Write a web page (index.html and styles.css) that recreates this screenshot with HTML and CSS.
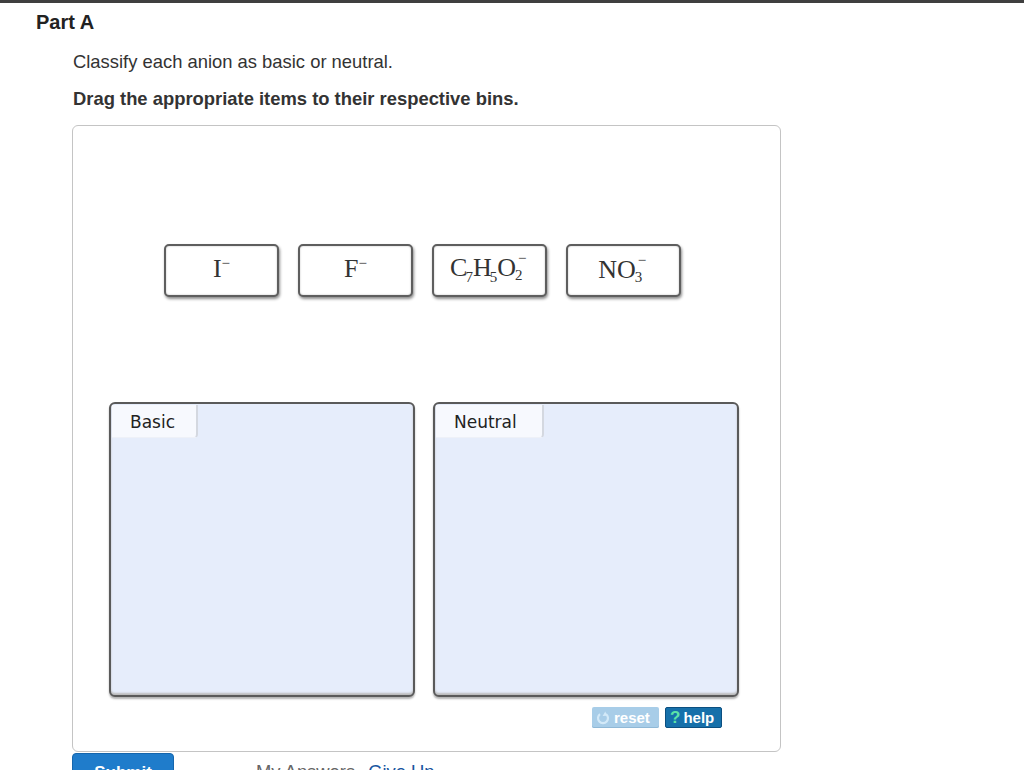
FILE: index.html
```html
<!DOCTYPE html>
<html>
<head>
<meta charset="utf-8">
<link rel="stylesheet" href="styles.css">
</head>
<body>
<div class="topbar"></div>
<h2 class="part">Part A</h2>
<div class="content">
  <p class="prompt">Classify each anion as basic or neutral.</p>
  <p class="instr">Drag the appropriate items to their respective bins.</p>
  <div class="workspace">
    <div class="tiles">
      <div class="tile"><span class="f">I<span class="minus">&minus;</span></span></div>
      <div class="tile"><span class="f">F<span class="minus">&minus;</span></span></div>
      <div class="tile"><span class="f">C<sub>7</sub>H<sub>5</sub>O<span class="stack"><span class="up">&minus;</span><span class="dn">2</span></span></span></div>
      <div class="tile"><span class="f">NO<span class="stack"><span class="up">&minus;</span><span class="dn">3</span></span></span></div>
    </div>
    <div class="bins">
      <div class="bin"><div class="label">Basic</div></div>
      <div class="bin"><div class="label">Neutral</div></div>
    </div>
    <div class="tools">
      <span class="btn reset"><svg class="ico" viewBox="0 0 14 14" width="14" height="14"><path d="M4 3.2 A5 5 0 1 0 10 3.2" fill="none" stroke="#d3e9f8" stroke-width="2.2"/><path d="M9.3 0.4 L11 4.8 L6.6 4.9 Z" fill="#d3e9f8"/></svg>reset</span>
      <span class="btn help"><span class="q">?</span>help</span>
    </div>
  </div>
  <div class="footer">
    <span class="submit">Submit</span>
    <span class="links"><span class="mine">My Answers</span><span class="giveup">Give Up</span></span>
  </div>
</div>
</body>
</html>
```

FILE: styles.css
```css
html, body {
  margin: 0;
  padding: 0;
  background: #fff;
  font-family: "Liberation Sans", Arial, sans-serif;
  color: #333;
  overflow: hidden;
  height: 770px;
}
.topbar {
  height: 3px;
  background: #3f3f3f;
}
.part {
  margin: 7px 0 0 36px;
  font-size: 20px;
  font-weight: bold;
  color: #222;
  line-height: 24px;
}
.content {
  margin-left: 72px;
  width: 709px;
}
.prompt {
  margin: 17px 0 0 1px;
  font-size: 18.4px;
  line-height: 22px;
}
.instr {
  margin: 15px 0 0 1px;
  font-size: 18.4px;
  font-weight: bold;
  line-height: 22px;
}
.workspace {
  margin-top: 15px;
  height: 625px;
  border: 1px solid #c4c4c4;
  border-radius: 6px;
}
.tiles {
  display: flex;
  gap: 19px;
  margin: 118px 0 0 91px;
}
.tile {
  width: 111px;
  height: 49px;
  border: 2px solid #5e5e5e;
  border-radius: 5px;
  background: #fff;
  box-shadow: 1px 2px 3px rgba(0,0,0,0.45), inset 0 0 2px #bbb;
  display: flex;
  align-items: center;
  justify-content: center;
}
.f {
  font-family: "Liberation Serif", "Times New Roman", serif;
  font-size: 26px;
  color: #333;
  line-height: 1;
  position: relative;
  top: -2px;
}
.minus {
  font-size: 15px;
  vertical-align: 9px;
}
.f sub {
  font-size: 15px;
  vertical-align: -6px;
  margin-left: -2px;
}
.stack {
  display: inline-block;
  position: relative;
  width: 14px;
  height: 24px;
  margin-left: -1px;
}
.stack .up {
  position: absolute;
  left: 3px;
  top: -1px;
  font-size: 15px;
  line-height: 15px;
}
.stack .dn {
  position: absolute;
  left: 0;
  bottom: -7px;
  font-size: 15px;
  line-height: 15px;
}
.bins {
  display: flex;
  gap: 18px;
  margin: 105px 0 0 36px;
}
.bin {
  width: 302px;
  height: 291px;
  background: #e6edfb;
  border: 2px solid #5a5a5a;
  border-radius: 6px;
  box-shadow: 0 2px 2px rgba(0,0,0,0.3), inset 0 -2px 2px #bbb;
}
.label {
  width: 66px;
  height: 32px;
  padding-left: 18px;
  margin: 1px 0 0 1px;
  background: #f7f9fe;
  border-right: 2px solid #d4d8e0;
  border-bottom: 1px solid #eef1f8;
  border-bottom-right-radius: 4px;
  font-family: "DejaVu Sans", Verdana, sans-serif;
  font-size: 17px;
  line-height: 34px;
  color: #222;
}
.bin:nth-child(2) .label {
  width: 88px;
}
.tools {
  display: flex;
  gap: 6px;
  margin: 10px 0 0 519px;
}
.btn {
  height: 21px;
  display: inline-flex;
  align-items: center;
  font-size: 15px;
  font-weight: bold;
  color: #fff;
  border-radius: 2px;
  padding: 0 4px;
  box-sizing: border-box;
}
.reset {
  width: 67px;
  background: #a8cde8;
  box-shadow: inset 0 -1px 0 #8fb8d6;
  gap: 4px;
}
.ico {
  flex: none;
}
.help {
  width: 57px;
  background: #1670aa;
  border: 1px solid #0b4f80;
  gap: 3px;
}
.q {
  color: #5de3a6;
  font-size: 17px;
}
.footer {
  display: flex;
  align-items: flex-start;
  margin-top: 1px;
}
.submit {
  width: 102px;
  height: 30px;
  background: #1f7ccb;
  border: 1px solid #1566ad;
  border-radius: 4px;
  color: #fff;
  font-weight: bold;
  font-size: 17px;
  text-align: center;
  line-height: 30px;
  box-sizing: border-box;
  padding-top: 4px;
}
.links {
  margin: 8px 0 0 82px;
  font-size: 18.4px;
}
.mine {
  color: #666;
}
.giveup {
  color: #1a55a0;
  margin-left: 13px;
}
```
